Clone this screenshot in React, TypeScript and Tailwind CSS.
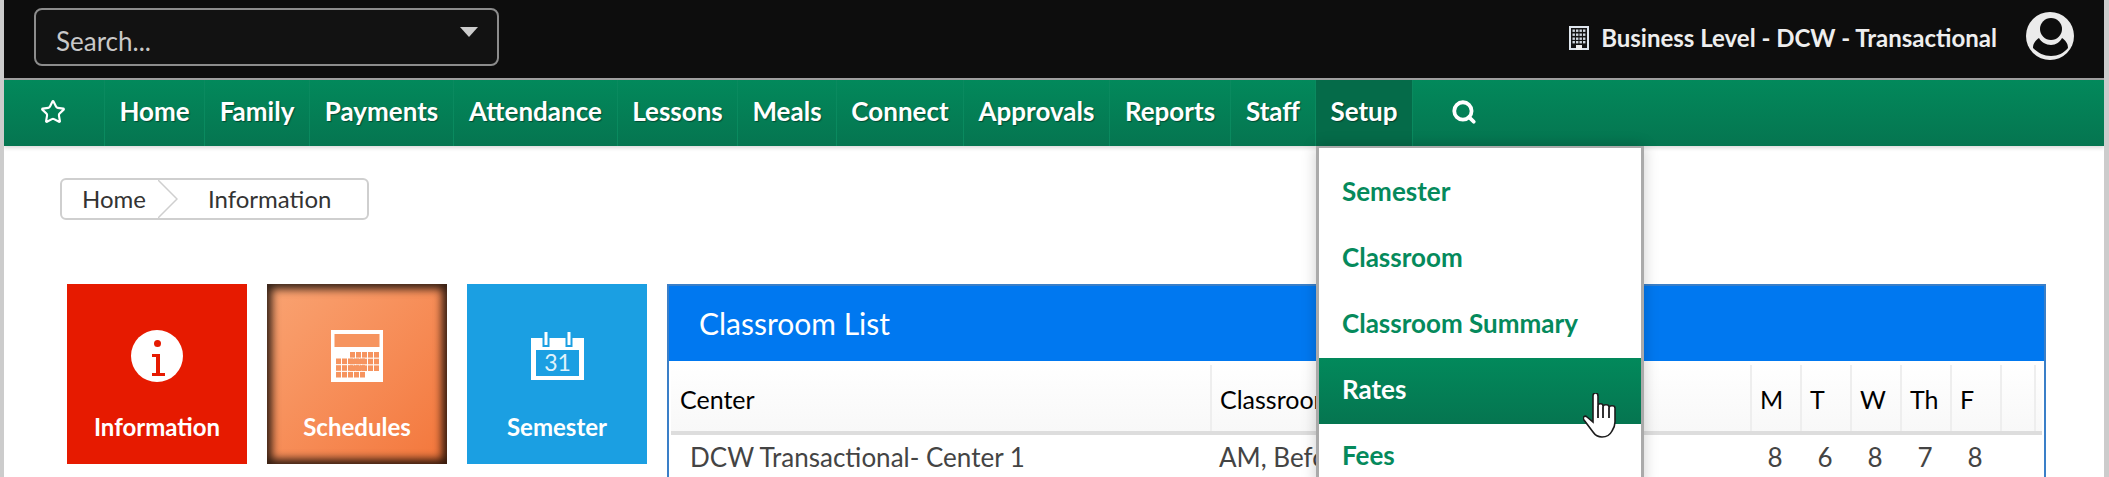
import { Star, Search } from 'lucide-react';

const font = "font-['Lato','Open_Sans',sans-serif]";

const navItems = [
  { label: 'Home', width: 'w-[100px]' },
  { label: 'Family', width: 'w-[105px]' },
  { label: 'Payments', width: 'w-[144px]' },
  { label: 'Attendance', width: 'w-[164px]' },
  { label: 'Lessons', width: 'w-[120px]' },
  { label: 'Meals', width: 'w-[99px]' },
  { label: 'Connect', width: 'w-[127px]' },
  { label: 'Approvals', width: 'w-[146px]' },
  { label: 'Reports', width: 'w-[121px]' },
  { label: 'Staff', width: 'w-[85px]' },
];

const menuItems = ['Semester', 'Classroom', 'Classroom Summary', 'Rates', 'Fees'];
const days = ['M', 'T', 'W', 'Th', 'F'];
const counts = [8, 6, 8, 7, 8];

function BuildingIcon() {
  return (
    <svg width="20" height="24" viewBox="0 0 20 24" className="shrink-0">
      <rect x="1" y="1" width="18" height="22" fill="#141414" stroke="#dfe6ee" strokeWidth="2" />
      <g fill="#cfd6de">
        {[3.5, 7.5, 11.5, 15].map((y) =>
          [3.5, 7, 10.5, 14].map((x) => <rect key={`${x}-${y}`} x={x} y={y} width="2.4" height="2.4" />),
        )}
      </g>
      <rect x="7" y="19" width="6" height="5" fill="#f0f0f0" />
    </svg>
  );
}

function AvatarIcon() {
  return (
    <svg width="48" height="48" viewBox="0 0 48 48">
      <circle cx="24" cy="24" r="24" fill="#ebebeb" />
      <circle cx="25" cy="17" r="11" fill="#0d0d0d" />
      <path d="M13 26c2 4 7 7 12 7s9-3 11-7c3 2 6 5 6 10-4 5-10 8-17 8S12 41 7 36c0-5 3-8 6-10z" fill="#0d0d0d" />
    </svg>
  );
}

function InfoIcon() {
  return (
    <svg width="52" height="52" viewBox="0 0 52 52">
      <circle cx="26" cy="26" r="26" fill="#fff" />
      <circle cx="26.5" cy="13.5" r="3.5" fill="#e61a00" />
      <path d="M21 24h8v19h5v3H21v-3h4V27h-4z" fill="#e61a00" />
    </svg>
  );
}

function ScheduleIcon() {
  const cells: [number, number][] = [];
  for (let x = 0; x < 5; x++) {
    for (let y = 0; y < 3; y++) {
      cells.push([19 + x * 6, 22 + y * 6.7]);
      cells.push([5 + x * 6, 28.5 + y * 6.7]);
    }
  }
  return (
    <svg width="52" height="52" viewBox="0 0 52 52">
      <rect width="52" height="52" fill="#fff" />
      <rect x="3.5" y="4" width="45" height="13" fill="#f6945f" />
      {cells.map(([x, y]) => (
        <rect key={`${x}-${y}`} x={x} y={y} width="5" height="5.6" fill="#f6945f" />
      ))}
    </svg>
  );
}

function CalendarIcon() {
  return (
    <svg width="53" height="48" viewBox="0 0 53 48">
      <path d="M0 6h53v42H0zM5 18v26h43V18z" fill="#fff" fillRule="evenodd" />
      <rect x="11.5" y="4" width="7" height="11" fill="#1b9fe2" />
      <rect x="34.5" y="4" width="7" height="11" fill="#1b9fe2" />
      <rect x="13.5" y="0" width="3" height="13" fill="#fff" />
      <rect x="36.5" y="0" width="3" height="13" fill="#fff" />
      <text x="26.5" y="39" textAnchor="middle" fontSize="23" fill="#dff2fb" fontFamily="Lato, sans-serif">31</text>
    </svg>
  );
}

function HandCursor() {
  return (
    <svg width="34" height="46" viewBox="0 0 34 46">
      <path
        d="M10 3c0-4 5-4 5 0v10c0-3 5-3 5 0v1c0-3 6-3 6 0v1c0-3 6-3 6 0v14c0 4-1 6-3 9-2 4-5 6-10 6-4 0-7-2-9-5L1 27c-2-3 1-5 3-3l6 5z"
        fill="#fff"
        stroke="#1c1c1c"
        strokeWidth="1.6"
      />
      <path d="M15 13v12M20 14v11M26 15v10" stroke="#1c1c1c" strokeWidth="1.8" />
    </svg>
  );
}

function Tile({ label, color, icon }: { label: string; color: string; icon: React.ReactNode }) {
  return (
    <div className={`w-[180px] h-[180px] shrink-0 flex flex-col items-center pt-[46px] ${color}`}>
      <div className="h-[52px] flex items-center">{icon}</div>
      <div className="mt-[30px] text-[24px] leading-[30px] font-bold text-white">{label}</div>
    </div>
  );
}

export default function App() {
  return (
    <div className={`relative h-[477px] w-[2109px] overflow-hidden bg-white border-l-4 border-r-[5px] border-[#cccccc] ${font}`}>
      {/* top bar */}
      <div className="h-[80px] bg-[#0d0d0d] border-b-2 border-[#a0a0a0] flex items-center justify-between pl-[30px] pr-[30px]">
        <div className="w-[465px] h-[58px] mb-[4px] rounded-[8px] border-2 border-[#8c8c8c] bg-[#121212] flex items-center justify-between pl-[20px] pr-[19px]">
          <span className="text-[26px] text-[#c8c8c8] mt-[8px]">Search...</span>
          <span className="w-0 h-0 -mt-[10px] border-x-[9px] border-x-transparent border-t-[10px] border-t-[#cccccc]" />
        </div>
        <div className="flex items-center">
          <span className="mb-[2px]"><BuildingIcon /></span>
          <span className="ml-[12px] mb-[2px] text-[24px] font-bold text-[#eeeeee]">Business Level - DCW - Transactional</span>
          <span className="ml-[29px] mb-[6px]"><AvatarIcon /></span>
        </div>
      </div>

      {/* nav */}
      <div className="h-[66px] flex bg-gradient-to-b from-[#02895b] to-[#057550] shadow-[0_2px_4px_rgba(0,0,0,0.15)]">
        <div className="w-[101px] flex items-center justify-center pr-[2px] pb-[2px] border-r border-[#0a8a5f]">
          <Star size={26} color="#ffffff" strokeWidth={2} />
        </div>
        {navItems.map((item) => (
          <div key={item.label} className={`${item.width} flex items-center justify-center pb-[4px] border-r border-[#0a8a5f] text-[26px] font-bold text-white [text-shadow:1px_1px_1px_rgba(0,0,0,0.4)]`}>
            {item.label}
          </div>
        ))}
        <div className="w-[96px] flex items-center justify-center pb-[4px] bg-[#056b49] text-[26px] font-bold text-white [text-shadow:1px_1px_1px_rgba(0,0,0,0.4)]">
          Setup
        </div>
        <div className="flex items-center pl-[38px] pb-[2px] border-l border-[#0a8a5f]">
          <Search size={26} color="#ffffff" strokeWidth={3.5} />
        </div>
      </div>

      {/* content */}
      <div className="pt-[32px] pl-[56px]">
        <div className="w-[309px] h-[42px] flex items-center rounded-[6px] border-2 border-[#cfcfcf] text-[24px] text-[#333333]">
          <span className="pl-[20px] w-[96px]">Home</span>
          <svg width="20" height="38" viewBox="0 0 20 38" className="shrink-0">
            <path d="M0 0l19 19L0 38" fill="none" stroke="#cfcfcf" strokeWidth="1.5" />
          </svg>
          <span className="pl-[30px]">Information</span>
        </div>

        <div className="mt-[64px] ml-[7px] flex gap-[20px]">
          <Tile label="Information" color="bg-[#e61a00]" icon={<InfoIcon />} />
          <Tile label="Schedules" color="bg-gradient-to-br from-[#f9a372] to-[#f3763a] shadow-[inset_0_0_8px_5px_rgba(0,0,0,0.8)]" icon={<ScheduleIcon />} />
          <Tile label="Semester" color="bg-[#1b9fe2]" icon={<CalendarIcon />} />

          <div className="w-[1379px] shrink-0 h-[200px] border-2 border-[#3a7fc8]">
            <div className="h-[75px] bg-[#0078f0] flex items-center pl-[30px] text-[30px] text-white">Classroom List</div>
            <div className="border-x-2 border-white">
              <div className="mt-[2px] h-[72px] pt-[2px] grid grid-cols-[539px_540px_50px_50px_50px_50px_50px_34px_1fr] items-center bg-gradient-to-b from-white to-[#f8f8f8] border-b-4 border-[#dddddd] text-[25px] text-black">
                <div className="pl-[9px] pt-[4px]">Center</div>
                <div className="pl-[8px] pt-[4px] border-l-2 border-[#eeeeee] h-full flex items-center">Classroom</div>
                {days.map((d) => (
                  <div key={d} className="pl-[8px] pt-[4px] border-l-2 border-[#eeeeee] h-full flex items-center">{d}</div>
                ))}
                <div className="border-l-2 border-[#eeeeee] h-full" />
                <div className="border-l-2 border-[#eeeeee] h-full" />
              </div>
              <div className="h-[44px] grid grid-cols-[539px_540px_50px_50px_50px_50px_50px_34px_1fr] items-center text-[26px] text-[#444444]">
                <div className="pl-[19px]">DCW Transactional- Center 1</div>
                <div className="pl-[9px] whitespace-nowrap overflow-hidden">AM, Before School</div>
                {counts.map((c, i) => (
                  <div key={i} className="text-center">{c}</div>
                ))}
              </div>
            </div>
          </div>
        </div>
      </div>

      {/* setup dropdown */}
      <div className="absolute left-[1312px] top-[146px] w-[328px] h-[340px] bg-white border-x-[3px] border-t-2 border-[#aaaaaa] pt-[12px] shadow-[0_0_14px_rgba(0,0,0,0.2)]">
        {menuItems.map((item) => (
          <div
            key={item}
            className={`h-[66px] flex items-center pl-[23px] pb-[3px] text-[26px] font-bold ${item === 'Rates' ? 'bg-gradient-to-b from-[#02895b] to-[#057550] text-white' : 'text-[#058a5c]'}`}
          >
            {item}
          </div>
        ))}
      </div>

      {/* mouse pointer over Rates */}
      <div className="absolute left-[1579px] top-[393px]">
        <HandCursor />
      </div>
    </div>
  );
}
